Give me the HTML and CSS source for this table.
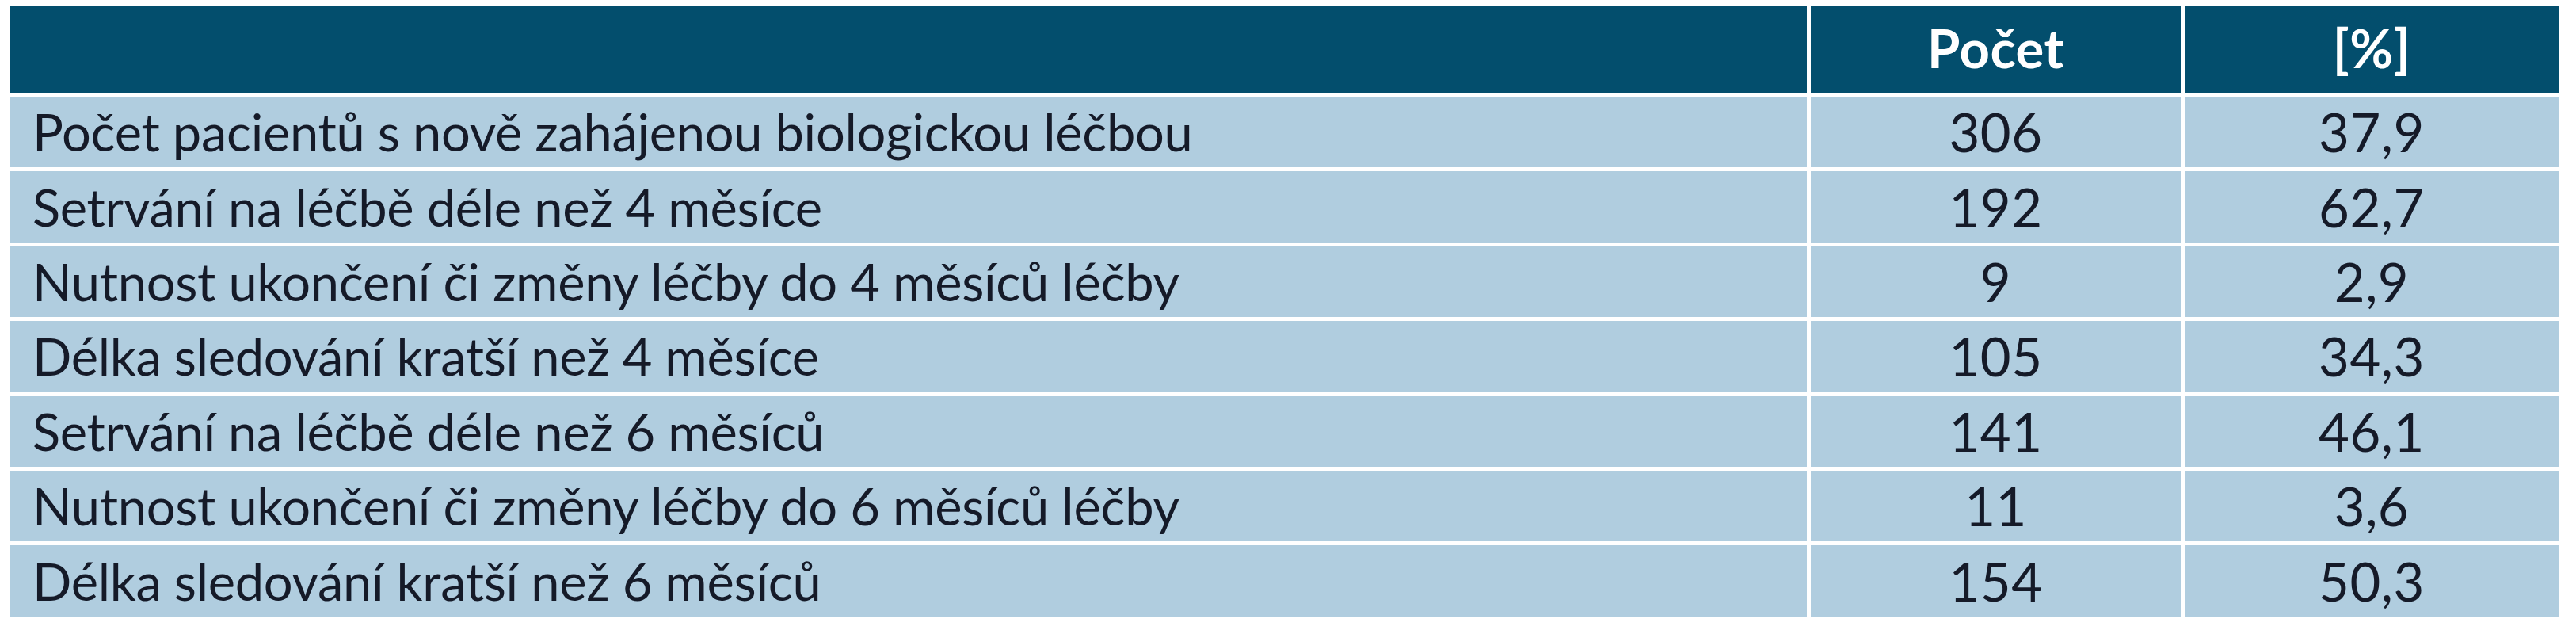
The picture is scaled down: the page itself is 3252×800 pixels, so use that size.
FILE: index.html
```html
<!DOCTYPE html>
<html lang="cs">
<head>
<meta charset="utf-8">
<title>Tabulka</title>
<link rel="stylesheet" href="styles.css">
</head>
<body>
<div class="table">
  <div class="cell head"></div>
  <div class="cell head num">Počet</div>
  <div class="cell head num">[%]</div>

  <div class="cell label">Počet pacientů s nově zahájenou biologickou léčbou</div>
  <div class="cell num">306</div>
  <div class="cell num">37,9</div>

  <div class="cell label">Setrvání na léčbě déle než 4 měsíce</div>
  <div class="cell num">192</div>
  <div class="cell num">62,7</div>

  <div class="cell label">Nutnost ukončení či změny léčby do 4 měsíců léčby</div>
  <div class="cell num">9</div>
  <div class="cell num">2,9</div>

  <div class="cell label">Délka sledování kratší než 4 měsíce</div>
  <div class="cell num">105</div>
  <div class="cell num">34,3</div>

  <div class="cell label">Setrvání na léčbě déle než 6 měsíců</div>
  <div class="cell num">141</div>
  <div class="cell num">46,1</div>

  <div class="cell label">Nutnost ukončení či změny léčby do 6 měsíců léčby</div>
  <div class="cell num">11</div>
  <div class="cell num">3,6</div>

  <div class="cell label">Délka sledování kratší než 6 měsíců</div>
  <div class="cell num">154</div>
  <div class="cell num">50,3</div>
</div>
</body>
</html>
```
FILE: styles.css
```css
html, body {
  margin: 0;
  padding: 0;
  background: #ffffff;
}

body {
  font-family: Lato, "Open Sans", "Liberation Sans", sans-serif;
  color: #151a28;
}

.table {
  display: grid;
  grid-template-columns: 2268px 467px 472px;
  grid-template-rows: 109px;
  grid-auto-rows: 89.4px;
  column-gap: 5px;
  row-gap: 5px;
  margin: 8px 0 0 13px;
  width: 3217px;
}

.cell {
  background: #b0cddf;
  display: flex;
  align-items: center;
  font-size: 65px;
  line-height: 1;
  letter-spacing: -0.3px;
  white-space: nowrap;
}

.label {
  padding-left: 28px;
}

.num {
  justify-content: center;
  font-size: 67px;
  letter-spacing: 0.5px;
}

.head {
  background: #034e6d;
  color: #ffffff;
  font-weight: 700;
  font-size: 67px;
  letter-spacing: 0.5px;
  padding-bottom: 4px;
}
```
